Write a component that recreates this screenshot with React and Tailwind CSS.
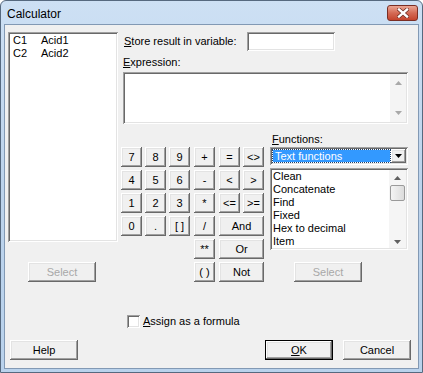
import React from "react";

const raised =
  "bg-[#f0f0f0] shadow-[inset_-1px_-1px_#696969,inset_1px_1px_#ffffff,inset_-2px_-2px_#a0a0a0,inset_2px_2px_#e3e3e3]";
const sunken =
  "bg-white shadow-[inset_1px_1px_#a0a0a0,inset_-1px_-1px_#ffffff,inset_2px_2px_#696969,inset_-2px_-2px_#e3e3e3]";

function Key({ label, className = "w-[21px]" }) {
  return (
    <div className={`${raised} ${className} h-[20px] flex items-center justify-center text-[11px] text-black`}>
      {label}
    </div>
  );
}

function Btn({ children, disabled, def, className = "" }) {
  return (
    <div
      className={`${raised} ${def ? "border border-black" : ""} w-[68px] h-[20px] flex items-center justify-center text-[11px] ${
        disabled ? "text-[#a8a8a8]" : "text-black"
      } ${className}`}
    >
      {children}
    </div>
  );
}

function Arrow({ up, color = "#a8a8a8", w = 7, h = 4 }) {
  return (
    <svg width={w} height={h} viewBox="0 0 7 4">
      {up ? <polygon points="0,4 7,4 3.5,0" fill={color} /> : <polygon points="0,0 7,0 3.5,4" fill={color} />}
    </svg>
  );
}

export default function App() {
  return (
    <div className="w-[423px] h-[373px] bg-white font-['Liberation_Sans',Arial,sans-serif]">
      <div className="w-full h-full rounded-t-[6px] border border-[#56697f] bg-gradient-to-b from-[#cde0f4] via-[#bcd3ec] to-[#b9d2ec] flex flex-col">
        {/* title bar */}
        <div className="h-[23px] flex items-start justify-between pl-[6px] pr-[4px]">
          <div className="self-center text-[12px] text-black pt-[2px]">Calculator</div>
          <div className="mt-[4px] w-[31px] h-[16px] rounded-[3px] border border-[#7a2e24] bg-gradient-to-b from-[#eaa593] via-[#d46a55] to-[#c4432c] flex items-center justify-center">
            <svg width="12" height="10" viewBox="0 0 12 10">
              <path d="M2 1.5 L10 8.5 M10 1.5 L2 8.5" stroke="#6b2a20" strokeWidth="3.8" strokeLinecap="square" />
              <path d="M2 1.5 L10 8.5 M10 1.5 L2 8.5" stroke="#ffffff" strokeWidth="2.4" strokeLinecap="square" />
            </svg>
          </div>
        </div>
        {/* client */}
        <div className="mx-[3px] mb-[3px] flex-1 border border-[#8299b4] bg-[#f0f0f0] flex flex-col text-[11px] text-black">
          <div className="flex pt-[7px]">
            {/* left column */}
            <div className="ml-[3px] w-[110px] flex flex-col">
              <div className={`${sunken} h-[210px] pt-[2px] pl-[5px] leading-[13px]`}>
                <div className="flex">
                  <span className="w-[28px]">C1</span>
                  <span>Acid1</span>
                </div>
                <div className="flex">
                  <span className="w-[28px]">C2</span>
                  <span>Acid2</span>
                </div>
              </div>
              <Btn disabled className="mt-[20px] ml-[20px]">
                Select
              </Btn>
            </div>
            {/* right column */}
            <div className="ml-[5px] w-[285px] flex flex-col">
              <div className="h-[19px] flex items-center">
                <div className="w-[124px] pl-[1px]">
                  <span className="underline">S</span>tore result in variable:
                </div>
                <div className={`${sunken} w-[88px] h-[19px]`} />
              </div>
              <div className="h-[16px] mt-[3px] flex items-center">
                <span className="underline">E</span>xpression:
              </div>
              <div className={`${sunken} mt-[2px] h-[52px] w-[285px] flex p-[2px]`}>
                <div className="flex-1" />
                <div className="w-[16px] bg-[#f4f4f4] flex flex-col items-center justify-between py-[7px]">
                  <Arrow up />
                  <Arrow />
                </div>
              </div>
              {/* keypad + functions */}
              <div className="flex mt-[8px]">
                <div className="ml-[-2px] pt-[15px] flex gap-[4px]">
                  <div className="flex flex-col gap-[3px]">
                    {[
                      ["7", "8", "9"],
                      ["4", "5", "6"],
                      ["1", "2", "3"],
                      ["0", ".", "[ ]"],
                    ].map((row, i) => (
                      <div key={i} className="flex gap-[3px]">
                        {row.map((k) => (
                          <Key key={k} label={k} />
                        ))}
                      </div>
                    ))}
                  </div>
                  <div className="flex flex-col gap-[3px]">
                    {["+", "-", "*", "/", "**", "( )"].map((k) => (
                      <Key key={k} label={k} />
                    ))}
                  </div>
                  <div className="flex flex-col gap-[3px]">
                    {[
                      ["=", "<>"],
                      ["<", ">"],
                      ["<=", ">="],
                    ].map((row, i) => (
                      <div key={i} className="flex gap-[3px]">
                        {row.map((k) => (
                          <Key key={k} label={k} />
                        ))}
                      </div>
                    ))}
                    {["And", "Or", "Not"].map((k) => (
                      <Key key={k} label={k} className="w-[45px]" />
                    ))}
                  </div>
                </div>
                <div className="ml-[6px] w-[138px] flex flex-col">
                  <div className="h-[15px] flex items-center pl-[2px]">
                    <span className="underline">F</span>unctions:
                  </div>
                  <div className={`${sunken} h-[18px] flex p-[2px]`}>
                    <div className="flex-1 m-[1px] bg-[#3399ff] text-white outline outline-1 outline-dotted outline-[#1d3f6a] flex items-center pl-[2px] leading-none">
                      Text functions
                    </div>
                    <div className={`${raised} w-[15px] flex items-center justify-center`}>
                      <Arrow color="#000000" />
                    </div>
                  </div>
                  <div className={`${sunken} mt-[3px] h-[82px] flex p-[2px]`}>
                    <div className="flex-1 pl-[1px] leading-[13px]">
                      {["Clean", "Concatenate", "Find", "Fixed", "Hex to decimal", "Item"].map((f) => (
                        <div key={f}>{f}</div>
                      ))}
                    </div>
                    <div className="w-[17px] bg-[#f5f5f5] flex flex-col items-center">
                      <div className="h-[15px] flex items-center justify-center">
                        <Arrow up color="#606060" />
                      </div>
                      <div className="w-[15px] h-[16px] rounded-[2px] border border-[#9a9a9a] bg-gradient-to-r from-[#f4f4f4] to-[#dcdcdc]" />
                      <div className="flex-1" />
                      <div className="h-[13px] flex items-center justify-center">
                        <Arrow color="#606060" />
                      </div>
                    </div>
                  </div>
                  <Btn disabled className="mt-[12px] ml-[24px]">
                    Select
                  </Btn>
                </div>
              </div>
            </div>
          </div>
          {/* checkbox row */}
          <div className="mt-[33px] ml-[122px] flex items-center h-[13px]">
            <div className={`${sunken} w-[13px] h-[13px]`} />
            <span className="ml-[3px]">
              <span className="underline">A</span>ssign as a formula
            </span>
          </div>
          {/* bottom buttons */}
          <div className="mt-[12px] flex pl-[5px] pr-[7px]">
            <Btn>Help</Btn>
            <div className="flex-1" />
            <Btn def>
              <span className="underline">O</span>K
            </Btn>
            <Btn className="ml-[10px]">Cancel</Btn>
          </div>
        </div>
      </div>
    </div>
  );
}
